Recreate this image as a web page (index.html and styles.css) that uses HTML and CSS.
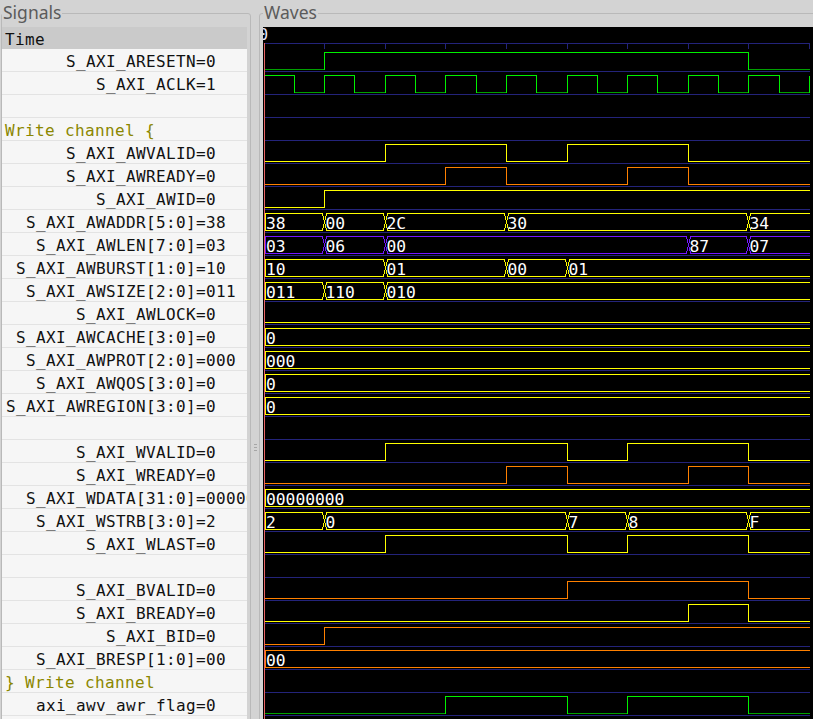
FILE: index.html
```html
<!DOCTYPE html>
<html>
<head>
<meta charset="utf-8">
<title>GTKWave</title>
<link rel="stylesheet" href="styles.css">
</head>
<body>
<div class="app">
  <fieldset class="pane signals">
    <legend>Signals</legend>
    <div class="list">
      <div class="row head">Time</div>
      <div class="row"><span class="name">S_AXI_ARESETN</span><span class="val">=0</span></div>
      <div class="row"><span class="name">S_AXI_ACLK</span><span class="val">=1</span></div>
      <div class="row"></div>
      <div class="row group">Write channel {</div>
      <div class="row"><span class="name">S_AXI_AWVALID</span><span class="val">=0</span></div>
      <div class="row"><span class="name">S_AXI_AWREADY</span><span class="val">=0</span></div>
      <div class="row"><span class="name">S_AXI_AWID</span><span class="val">=0</span></div>
      <div class="row"><span class="name">S_AXI_AWADDR[5:0]</span><span class="val">=38</span></div>
      <div class="row"><span class="name">S_AXI_AWLEN[7:0]</span><span class="val">=03</span></div>
      <div class="row"><span class="name">S_AXI_AWBURST[1:0]</span><span class="val">=10</span></div>
      <div class="row"><span class="name">S_AXI_AWSIZE[2:0]</span><span class="val">=011</span></div>
      <div class="row"><span class="name">S_AXI_AWLOCK</span><span class="val">=0</span></div>
      <div class="row"><span class="name">S_AXI_AWCACHE[3:0]</span><span class="val">=0</span></div>
      <div class="row"><span class="name">S_AXI_AWPROT[2:0]</span><span class="val">=000</span></div>
      <div class="row"><span class="name">S_AXI_AWQOS[3:0]</span><span class="val">=0</span></div>
      <div class="row"><span class="name">S_AXI_AWREGION[3:0]</span><span class="val">=0</span></div>
      <div class="row"></div>
      <div class="row"><span class="name">S_AXI_WVALID</span><span class="val">=0</span></div>
      <div class="row"><span class="name">S_AXI_WREADY</span><span class="val">=0</span></div>
      <div class="row"><span class="name">S_AXI_WDATA[31:0]</span><span class="val">=00000000</span></div>
      <div class="row"><span class="name">S_AXI_WSTRB[3:0]</span><span class="val">=2</span></div>
      <div class="row"><span class="name">S_AXI_WLAST</span><span class="val">=0</span></div>
      <div class="row"></div>
      <div class="row"><span class="name">S_AXI_BVALID</span><span class="val">=0</span></div>
      <div class="row"><span class="name">S_AXI_BREADY</span><span class="val">=0</span></div>
      <div class="row"><span class="name">S_AXI_BID</span><span class="val">=0</span></div>
      <div class="row"><span class="name">S_AXI_BRESP[1:0]</span><span class="val">=00</span></div>
      <div class="row group">} Write channel</div>
      <div class="row"><span class="name">axi_awv_awr_flag</span><span class="val">=0</span></div>
      <div class="row"></div>
    </div>
  </fieldset>
  <div class="handle"><span class="grip"></span></div>
  <fieldset class="pane waves">
    <legend>Waves</legend>
    <div class="canvas">
      <svg class="wave" width="550" height="692" viewBox="263 27 550 692" shape-rendering="crispEdges">
        <text class="tlabel" x="259" y="40">0</text>
        <!-- ruler -->
        <path class="blue" d="M264 43.5H810M264.5 43V48.5M324.5 43V48.5M385.5 43V48.5M445.5 43V48.5M506.5 43V48.5M567.5 43V48.5M627.5 43V48.5M688.5 43V48.5M748.5 43V48.5M809.5 43V48.5"/>
        <!-- row separators -->
        <path class="blue" d="M264 71.5H810M264 94.5H810M264 117.5H810M264 140.5H810M264 163.5H810M264 186.5H810M264 209.5H810M264 232.5H810M264 255.5H810M264 278.5H810M264 301.5H810M264 324.5H810M264 347.5H810M264 370.5H810M264 393.5H810M264 416.5H810M264 439.5H810M264 462.5H810M264 485.5H810M264 508.5H810M264 531.5H810M264 554.5H810M264 577.5H810M264 600.5H810M264 623.5H810M264 646.5H810M264 669.5H810M264 692.5H810M264 715.5H810"/>

        <!-- ARESETN -->
        <path class="dgrn" d="M264 69.5H324.5M748.5 69.5H810"/>
        <path class="grn" d="M324.5 69.5V52.5H748.5V69.5"/>
        <!-- ACLK -->
        <path class="dgrn" d="M294.5 92.5H324.5M354.5 92.5H385.5M415.5 92.5H445.5M476.5 92.5H506.5M536.5 92.5H567.5M597.5 92.5H627.5M657.5 92.5H688.5M718.5 92.5H748.5M779.5 92.5H809.5"/>
        <path class="grn" d="M264 75.5H294.5V92.5M324.5 92.5V75.5H354.5V92.5M385.5 92.5V75.5H415.5V92.5M445.5 92.5V75.5H476.5V92.5M506.5 92.5V75.5H536.5V92.5M567.5 92.5V75.5H597.5V92.5M627.5 92.5V75.5H657.5V92.5M688.5 92.5V75.5H718.5V92.5M748.5 92.5V75.5H779.5V92.5M809.5 92.5V75.5"/>

        <!-- AWVALID -->
        <path class="yel" d="M264 161.5H385.5V144.5H506.5V161.5H567.5V144.5H688.5V161.5H810"/>
        <!-- AWREADY -->
        <path class="org" d="M264 184.5H445.5V167.5H506.5V184.5H627.5V167.5H688.5V184.5H810"/>
        <!-- AWID -->
        <path class="yel" d="M264 207.5H324.5V190.5H810"/>
        <!-- AWADDR -->
        <path class="yel" d="M265.5 213.5H322.5L324.5 222L322.5 230.5H265.5ZM326.5 213.5H383.5L385.5 222L383.5 230.5H326.5L324.5 222ZM387.5 213.5H504.5L506.5 222L504.5 230.5H387.5L385.5 222ZM508.5 213.5H746.5L748.5 222L746.5 230.5H508.5L506.5 222ZM810 213.5H750.5L748.5 222L750.5 230.5H810"/>
        <text class="vt" x="266" y="229">38</text>
        <text class="vt" x="325.5" y="229">00</text>
        <text class="vt" x="386.5" y="229">2C</text>
        <text class="vt" x="507.5" y="229">30</text>
        <text class="vt" x="749.5" y="229">34</text>
        <!-- AWLEN -->
        <path class="pur" d="M265.5 236.5H322.5L324.5 245L322.5 253.5H265.5ZM326.5 236.5H383.5L385.5 245L383.5 253.5H326.5L324.5 245ZM387.5 236.5H686.5L688.5 245L686.5 253.5H387.5L385.5 245ZM690.5 236.5H746.5L748.5 245L746.5 253.5H690.5L688.5 245ZM810 236.5H750.5L748.5 245L750.5 253.5H810"/>
        <text class="vt" x="266" y="252">03</text>
        <text class="vt" x="325.5" y="252">06</text>
        <text class="vt" x="386.5" y="252">00</text>
        <text class="vt" x="689.5" y="252">87</text>
        <text class="vt" x="749.5" y="252">07</text>
        <!-- AWBURST -->
        <path class="yel" d="M265.5 259.5H383.5L385.5 268L383.5 276.5H265.5ZM387.5 259.5H504.5L506.5 268L504.5 276.5H387.5L385.5 268ZM508.5 259.5H565.5L567.5 268L565.5 276.5H508.5L506.5 268ZM810 259.5H569.5L567.5 268L569.5 276.5H810"/>
        <text class="vt" x="266" y="275">10</text>
        <text class="vt" x="386.5" y="275">01</text>
        <text class="vt" x="507.5" y="275">00</text>
        <text class="vt" x="568.5" y="275">01</text>
        <!-- AWSIZE -->
        <path class="yel" d="M265.5 282.5H322.5L324.5 291L322.5 299.5H265.5ZM326.5 282.5H383.5L385.5 291L383.5 299.5H326.5L324.5 291ZM810 282.5H387.5L385.5 291L387.5 299.5H810"/>
        <text class="vt" x="266" y="298">011</text>
        <text class="vt" x="325.5" y="298">110</text>
        <text class="vt" x="386.5" y="298">010</text>
        <!-- AWLOCK -->
        <path class="yel" d="M264 322.5H810"/>
        <!-- AWCACHE / AWPROT / AWQOS / AWREGION -->
        <path class="yel" d="M810 328.5H265.5V345.5H810M810 351.5H265.5V368.5H810M810 374.5H265.5V391.5H810M810 397.5H265.5V414.5H810"/>
        <text class="vt" x="266" y="344">0</text>
        <text class="vt" x="266" y="367">000</text>
        <text class="vt" x="266" y="390">0</text>
        <text class="vt" x="266" y="413">0</text>

        <!-- WVALID -->
        <path class="yel" d="M264 460.5H385.5V443.5H567.5V460.5H627.5V443.5H748.5V460.5H810"/>
        <!-- WREADY -->
        <path class="org" d="M264 483.5H506.5V466.5H567.5V483.5H688.5V466.5H748.5V483.5H810"/>
        <!-- WDATA -->
        <path class="yel" d="M810 489.5H265.5V506.5H810"/>
        <text class="vt" x="266" y="505">00000000</text>
        <!-- WSTRB -->
        <path class="yel" d="M265.5 512.5H322.5L324.5 521L322.5 529.5H265.5ZM326.5 512.5H565.5L567.5 521L565.5 529.5H326.5L324.5 521ZM569.5 512.5H625.5L627.5 521L625.5 529.5H569.5L567.5 521ZM629.5 512.5H746.5L748.5 521L746.5 529.5H629.5L627.5 521ZM810 512.5H750.5L748.5 521L750.5 529.5H810"/>
        <text class="vt" x="266" y="528">2</text>
        <text class="vt" x="325.5" y="528">0</text>
        <text class="vt" x="568.5" y="528">7</text>
        <text class="vt" x="628.5" y="528">8</text>
        <text class="vt" x="749.5" y="528">F</text>
        <!-- WLAST -->
        <path class="yel" d="M264 552.5H385.5V535.5H567.5V552.5H627.5V535.5H748.5V552.5H810"/>

        <!-- BVALID -->
        <path class="org" d="M264 598.5H567.5V581.5H748.5V598.5H810"/>
        <!-- BREADY -->
        <path class="yel" d="M264 621.5H688.5V604.5H748.5V621.5H810"/>
        <!-- BID -->
        <path class="org" d="M264 644.5H324.5V627.5H810"/>
        <!-- BRESP -->
        <path class="org" d="M810 650.5H265.5V667.5H810"/>
        <text class="vt" x="266" y="666">00</text>

        <!-- axi_awv_awr_flag -->
        <path class="dgrn" d="M264 713.5H445.5M567.5 713.5H627.5M748.5 713.5H810"/>
        <path class="grn" d="M445.5 713.5V696.5H567.5V713.5M627.5 713.5V696.5H748.5V713.5"/>

        <!-- marker -->
        <path class="mark" d="M264.5 43V719"/>
      </svg>
    </div>
  </fieldset>
</div>
</body>
</html>
```

FILE: styles.css
```css
html, body {
  margin: 0;
  padding: 0;
  background: #d3d3d3;
  overflow: hidden;
}

.app {
  display: flex;
  width: 813px;
  height: 719px;
  overflow: hidden;
}

.pane {
  box-sizing: border-box;
  margin: 0;
  border: 1px solid #b9b9b9;
  border-radius: 3px;
  height: 760px;
  min-width: 0;
  flex: none;
}

.pane legend {
  font-family: "Noto Sans", "Open Sans", sans-serif;
  font-size: 17.5px;
  line-height: 25px;
  padding: 0 1px 2px;
  color: #5b5b5b;
}

.signals {
  width: 250px;
  margin-left: 1px;
  padding: 0 3px 0 0;
}

.handle {
  width: 8px;
  flex: none;
  display: flex;
  justify-content: center;
  padding-top: 444px;
  box-sizing: border-box;
}

.grip {
  display: block;
  width: 3px;
  height: 7px;
  background: repeating-linear-gradient(#a6a6a6 0 1px, transparent 1px 3px);
}

.waves {
  width: 570px;
  padding: 0 0 0 3px;
}

.list {
  background: #f6f6f6;
  height: 740px;
}

.row {
  box-sizing: border-box;
  height: 23px;
  padding-top: 3px;
  border-bottom: 1px solid #e3e3e3;
  display: flex;
  white-space: nowrap;
  overflow: hidden;
  font-family: "DejaVu Sans Mono", monospace;
  font-size: 16px;
  letter-spacing: 0.37px;
  line-height: 19px;
  color: #111;
}

.row.head {
  height: 22px;
  background: #cacaca;
  border-bottom: none;
  padding-left: 3px;
}

.row.group {
  color: #8b8700;
  padding-left: 3px;
}

.name {
  flex: none;
  width: 194px;
  text-align: right;
}

.val {
  flex: none;
}

.canvas {
  background: #000;
  height: 700px;
  width: 560px;
  overflow: hidden;
}

.wave {
  display: block;
}

.wave path {
  fill: none;
  stroke-width: 1;
}

.blue { stroke: #23237a; }
.grn { stroke: #00f000; }
.dgrn { stroke: #00a000; }
.yel { stroke: #ffff00; }
.org { stroke: #ff8000; }
.pur { stroke: #7316ff; }
.mark { stroke: #e86464; }

.vt {
  font-family: "DejaVu Sans Mono", monospace;
  font-size: 16.3px;
  fill: #ffffff;
}

.tlabel {
  font-family: "DejaVu Sans Mono", monospace;
  font-size: 15px;
  fill: #e8e8ff;
}
```
